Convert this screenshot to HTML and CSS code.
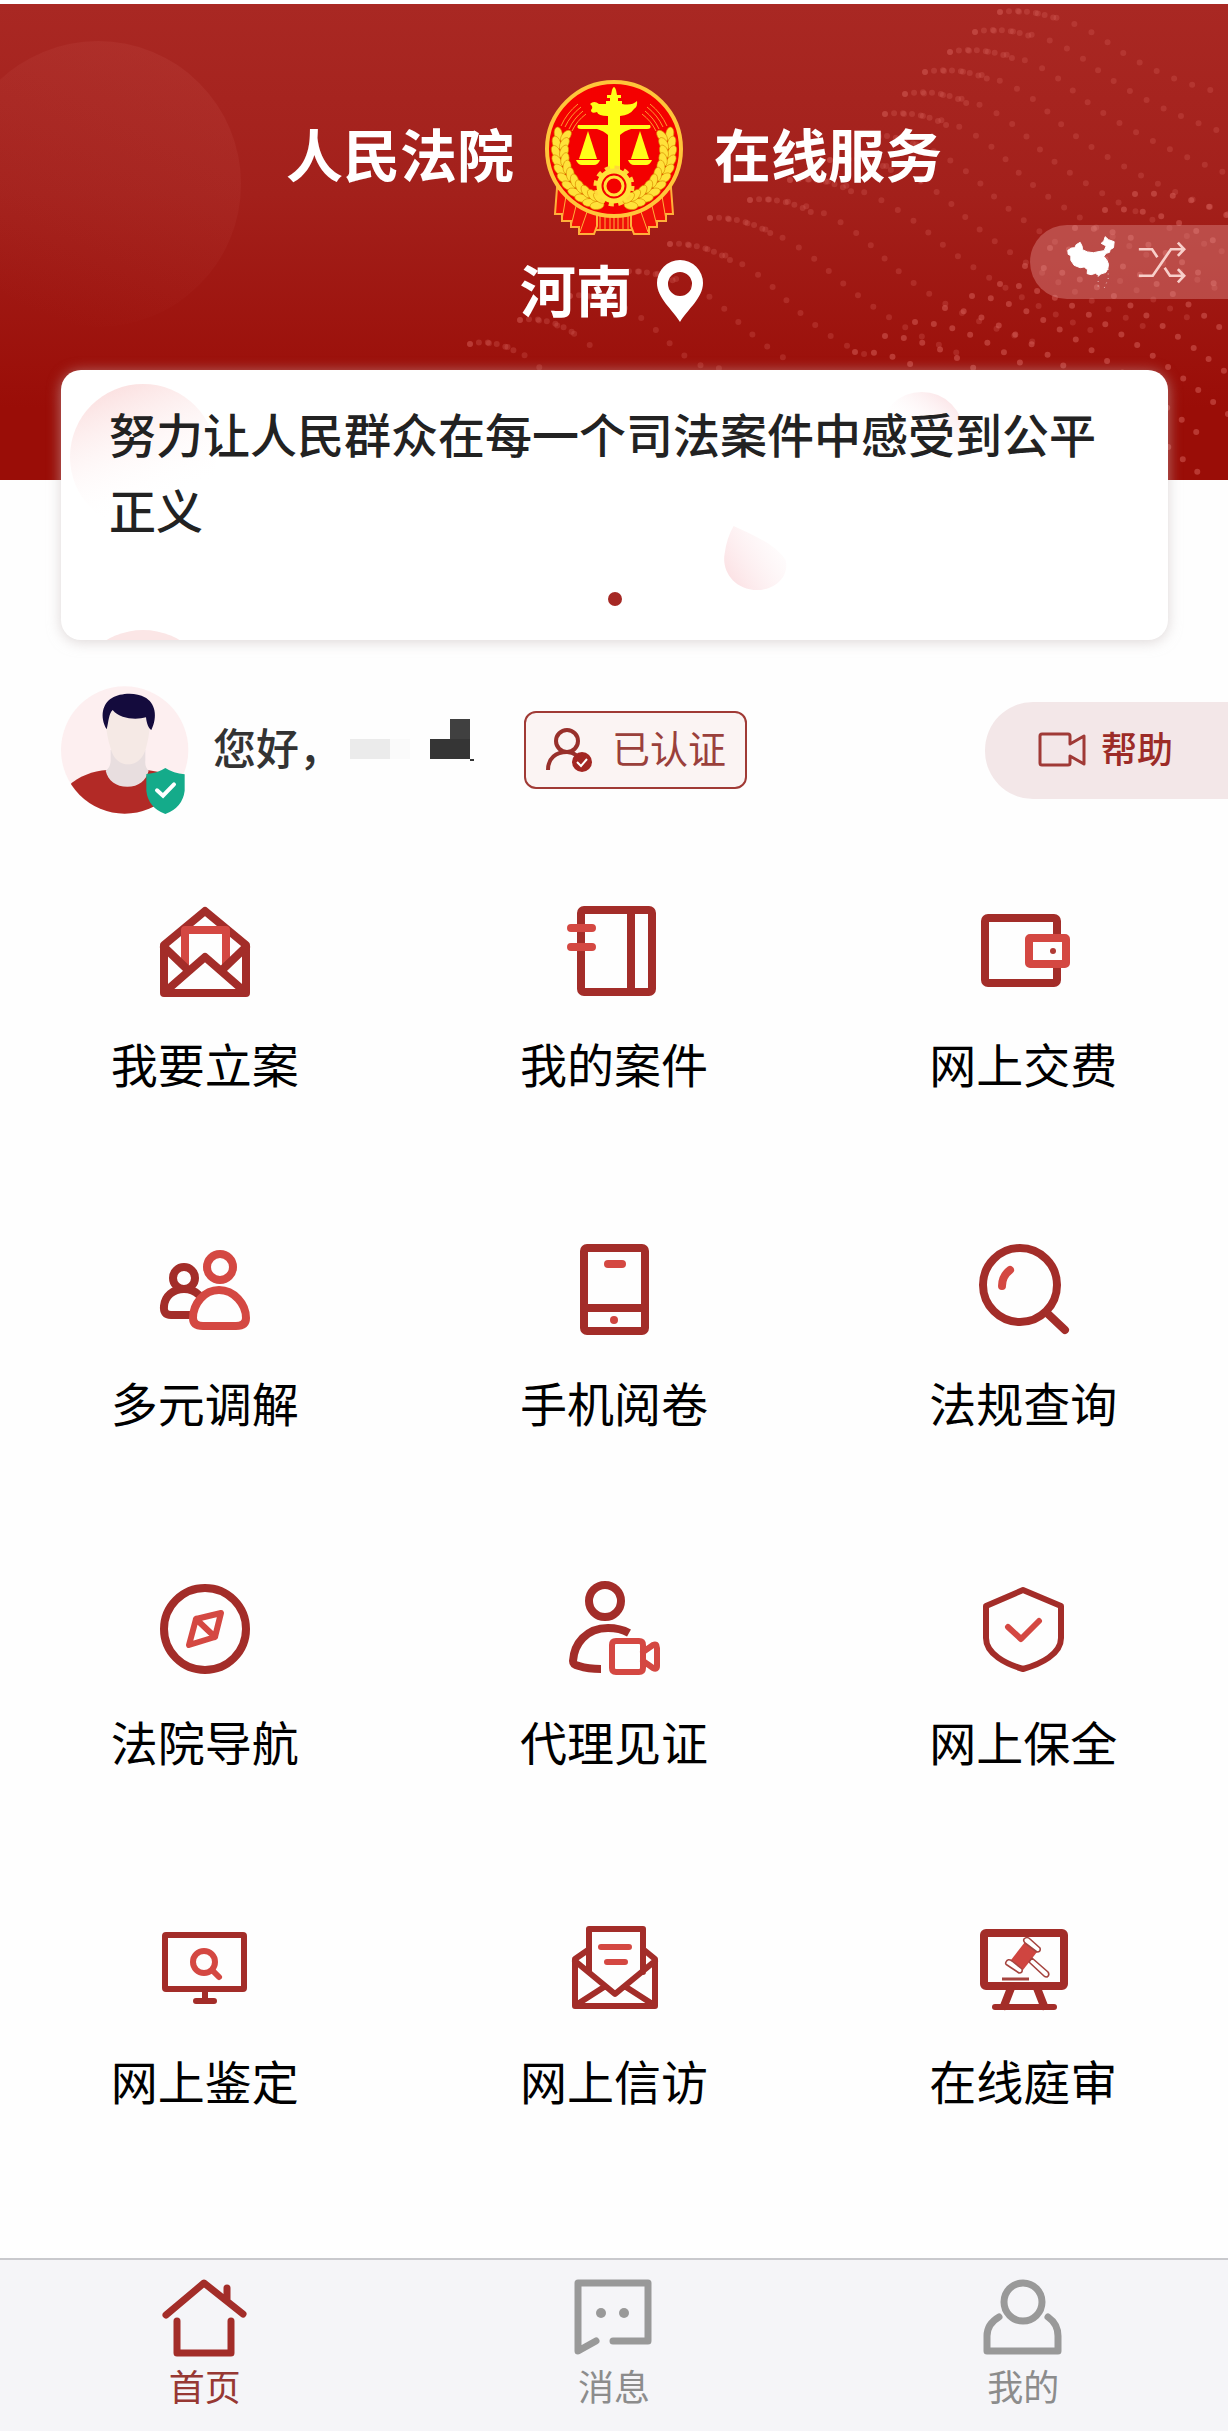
FILE: index.html
```html
<!DOCTYPE html>
<html lang="zh-CN">
<head>
<meta charset="utf-8">
<meta name="viewport" content="width=device-width, initial-scale=1">
<title>人民法院在线服务</title>
<link rel="stylesheet" href="styles.css">
</head>
<body>
<header class="hero">
  <svg class="hero-art" viewBox="0 0 1228 476" preserveAspectRatio="xMaxYMid slice" aria-hidden="true">
    <defs>
      <linearGradient id="bubble" x1="0.8" y1="0" x2="0.4" y2="1">
        <stop offset="0" stop-color="#c04a44" stop-opacity=".26"/>
        <stop offset="1" stop-color="#c04a44" stop-opacity="0"/>
      </linearGradient>
    </defs>
    <circle cx="98" cy="180" r="143" fill="url(#bubble)"/>
    <g class="dots">
      <path d="M1000 8Q1060 4 1110 40T1228 90"/>
      <path d="M975 28Q1040 20 1090 60T1228 130"/>
      <path d="M950 48Q1020 40 1070 84T1228 170"/>
      <path d="M925 68Q1000 60 1050 110T1228 210"/>
      <path d="M905 90Q980 84 1030 136T1228 250"/>
      <path d="M885 110Q960 106 1010 160T1228 290"/>
      <path d="M860 132Q930 130 985 184T1200 320"/>
      <path d="M830 156Q900 150 960 208T1160 330"/>
      <path d="M790 176Q860 170 930 230T1100 330"/>
      <path d="M750 196Q820 190 880 250T1040 340"/>
      <path d="M710 214Q770 214 830 268T960 350"/>
      <path d="M670 240Q730 240 780 290T880 356"/>
      <path d="M620 268Q680 262 730 310T800 360"/>
      <path d="M570 292Q620 290 660 330T720 364"/>
      <path d="M520 316Q560 312 600 350"/>
      <path d="M470 340Q510 334 540 364"/>
    </g>
    <g class="dots ridge">
      <path d="M1000 8Q1030 4 1060 16M975 28Q1005 22 1035 34M950 48Q980 42 1012 54M925 68Q960 62 990 76M905 90Q940 84 968 100M885 110Q920 106 948 122M860 132Q894 128 922 144M830 156Q866 150 894 168M790 176Q826 172 856 190M750 196Q784 192 814 210M710 214Q742 212 772 230M670 240Q700 238 730 256M620 268Q650 264 680 280M570 292Q596 288 624 306M520 316Q546 312 572 328M470 340Q494 334 520 350"/>
    </g>
    <g class="dots dots-bright">
      <path d="M1135 190Q1180 186 1228 212"/>
      <path d="M1105 206Q1160 200 1228 246"/>
      <path d="M1075 224Q1140 222 1228 290"/>
      <path d="M1050 244Q1120 244 1228 330"/>
      <path d="M1025 262Q1090 262 1228 370"/>
      <path d="M1000 280Q1070 280 1228 410"/>
      <path d="M972 292Q1040 292 1210 440"/>
      <path d="M945 304Q1010 306 1200 470"/>
      <path d="M915 318Q980 320 1060 390"/>
      <path d="M885 332Q940 334 1000 384"/>
      <path d="M855 348Q900 346 940 380"/>
    </g>
  </svg>
  <h1 class="brand">
    <span class="brand-text">人民法院</span>
    <svg class="emblem" viewBox="0 0 140 158" aria-hidden="true">
      <defs>
        <g id="leaf">
          <ellipse cx="12" cy="72" rx="4" ry="7" transform="rotate(-24 12 72)"/>
          <ellipse cx="20" cy="72" rx="4" ry="7" transform="rotate(24 20 72)"/>
        </g>
        <g id="half">
          <path class="ribbon" d="M13 110L11 136H18V143H27V149H35V156H50L53 148V136Z"/>
          <path class="ribbon-fold" d="M22 118L18 142M32 128L27 148M43 134L36 154"/>
        </g>
        <g id="wheat">
          <use href="#leaf" transform="rotate(16 70 72)"/>
          <use href="#leaf" transform="rotate(7 70 72)"/>
          <use href="#leaf" transform="rotate(-2 70 72)"/>
          <use href="#leaf" transform="rotate(-11 70 72)"/>
          <use href="#leaf" transform="rotate(-20 70 72)"/>
          <use href="#leaf" transform="rotate(-29 70 72)"/>
          <use href="#leaf" transform="rotate(-38 70 72)"/>
          <use href="#leaf" transform="rotate(-47 70 72)"/>
          <use href="#leaf" transform="rotate(-56 70 72)"/>
          <use href="#leaf" transform="rotate(-65 70 72)"/>
          <use href="#leaf" transform="rotate(-73 70 72)"/>
        </g>
        <g id="rays">
          <path d="M17 48A58 58 0 0 1 34 26M21 49A54 54 0 0 1 37 29M25 51A50 50 0 0 1 39 33M28 53A46 46 0 0 1 42 36"/>
        </g>
        <g id="pan">
          <path d="M44 53L35 81H53Z"/>
          <path d="M32 82H56Q54 87 50 87H38Q34 87 32 82Z"/>
        </g>
      </defs>
      <path class="ribbon" d="M50 134H90V152H50Z"/>
      <path class="ribbon-fold" d="M56 136V152M61 136V152M66 136V152M70 136V152M74 136V152M79 136V152M84 136V152"/>
      <use href="#half"/>
      <use href="#half" transform="translate(140 0) scale(-1 1)"/>
      <circle cx="70" cy="71" r="67" fill="#f40000" stroke="#ffc53a" stroke-width="4"/>
      <g fill="none" stroke="#ff9a2e" stroke-width="1">
        <use href="#rays"/>
        <use href="#rays" transform="translate(140 0) scale(-1 1)"/>
      </g>
      <g fill="#ffe23a" stroke="#d98a00" stroke-width=".6">
        <use href="#wheat"/>
        <use href="#wheat" transform="translate(140 0) scale(-1 1)"/>
      </g>
      <g fill="#ffff18">
        <path d="M68 12Q70 6 72 12L73 17H77V20H74V23H78V26Q88 28 93 23Q94 28 90 31Q86 37 76 38V92H64V38Q54 38 53 34Q47 36 47 32Q50 29 46 26Q50 22 55 26H62V23H66V20H63V17H67Z"/>
        <path d="M34 47Q32 51 37 51H53Q60 53 64 57V47H37ZM106 47Q108 51 103 51H87Q80 53 76 57V47H103Z"/>
        <use href="#pan"/>
        <use href="#pan" transform="translate(140 0) scale(-1 1)"/>
      </g>
      <circle cx="70" cy="108" r="18" fill="none" stroke="#ffd83a" stroke-width="5" stroke-dasharray="5 4.42"/>
      <circle cx="70" cy="108" r="15" fill="#f40000" stroke="#ffe23a" stroke-width="5"/>
      <circle cx="70" cy="108" r="9" fill="#f40000" stroke="#ffe23a" stroke-width="3"/>
    </svg>
    <span class="brand-text">在线服务</span>
  </h1>
  <button class="region" type="button">
    <span>河南</span>
    <svg class="pin" viewBox="0 0 48 62" aria-hidden="true">
      <path fill="#fff" fill-rule="evenodd" d="M24 0A23 23 0 0 1 47 23C47 38 31 50 24 62C17 50 1 38 1 23A23 23 0 0 1 24 0ZM24 12A12 12 0 1 0 24 36A12 12 0 1 0 24 12Z"/>
    </svg>
  </button>
  <button class="switcher" type="button" aria-label="切换地区">
    <svg class="map" viewBox="195 92 155 189" aria-hidden="true">
      <path fill="#fff" stroke="#fff" stroke-width="3" stroke-linejoin="round" d="M203 150L214 143L224 142L228 133L240 126L246 138L247 148L262 155L280 157L300 153L312 151L318 137L303 129L311 122L315 109L325 118L342 124L340 142L330 148L328 156L318 159L311 168L321 181L325 192L323 205L317 216L302 221L296 226L286 219L273 223L261 220L262 208L252 200L240 202L222 195L212 180L212 166L204 162Z"/>
      <path fill="none" stroke="#fff" stroke-width="3" stroke-dasharray="2 12" d="M324 206V236L310 268M294 228V262"/>
    </svg>
    <svg class="shuffle" viewBox="410 120 150 136" aria-hidden="true">
      <path fill="none" stroke="#f8cfca" stroke-width="8" d="M415 148H455L471 172M415 228H457L512 148H548M493 204L509 228H548M533 128L552 148L533 168M533 208L552 228L533 248"/>
    </svg>
  </button>
</header>

<main class="content">
  <section class="notice">
    <svg class="notice-art" viewBox="0 0 1106 270" preserveAspectRatio="xMidYMid slice" aria-hidden="true">
      <defs>
        <linearGradient id="blush" x1="0.3" y1="0" x2="0.7" y2="1">
          <stop offset="0" stop-color="#fbdfdf"/>
          <stop offset=".8" stop-color="#fff" stop-opacity="0"/>
        </linearGradient>
        <linearGradient id="blush-right" x1="1" y1="0" x2="0.4" y2="0.8">
          <stop offset="0" stop-color="#f9d6da"/>
          <stop offset=".8" stop-color="#fff" stop-opacity="0"/>
        </linearGradient>
        <linearGradient id="blush-low" x1="0" y1="0.9" x2="0.9" y2="0.3">
          <stop offset="0" stop-color="#fbdde0"/>
          <stop offset="1" stop-color="#fdf0f2" stop-opacity=".2"/>
        </linearGradient>
      </defs>
      <circle cx="82" cy="87" r="73" fill="url(#blush)"/>
      <circle cx="860" cy="64" r="42" fill="url(#blush-right)"/>
      <path d="M672 156C688 164 712 172 724 190C728 208 712 220 696 220C672 220 660 200 663 184Q665 168 672 156Z" fill="url(#blush-low)"/>
      <circle cx="82" cy="332" r="72" fill="#fbe6e6"/>
    </svg>
    <p class="notice-text">努力让人民群众在每一个司法案件中感受到公平正义</p>
    <span class="notice-dot"></span>
  </section>

  <section class="user">
    <svg class="avatar" viewBox="63 48 384 384" aria-hidden="true">
      <defs><clipPath id="face-clip"><circle cx="254" cy="240" r="191"/></clipPath></defs>
      <circle cx="254" cy="240" r="191" fill="#fdeff0"/>
      <g clip-path="url(#face-clip)">
        <path fill="#b22a26" d="M85 348C115 318 160 303 200 300H322L440 320V440H85Z"/>
        <path fill="#e8dedf" d="M212 240H316V270Q314 292 326 302C318 332 296 350 262 350C228 350 204 332 197 302Q212 292 212 270Z"/>
        <path fill="#f5e9e5" d="M198 120H330V170Q326 205 318 235C308 268 290 283 264 283C236 283 218 262 212 235Q200 200 198 160Z"/>
        <path fill="#140b3d" d="M200 178C178 140 188 100 216 84C240 68 290 66 314 82C346 98 354 140 334 180C326 176 320 162 318 142C290 150 240 148 218 120C206 130 206 156 200 178Z"/>
      </g>
      <path fill="#14ab8a" d="M319 312Q352 310 376 294Q400 310 434 313V362Q428 412 376 432Q324 412 319 362Z"/>
      <path fill="none" stroke="#fff" stroke-width="12" stroke-linecap="round" d="M351 361L369 377L402 343"/>
    </svg>
    <p class="greeting">您好，</p>
    <svg class="masked-name" viewBox="0 0 130 44" role="img" aria-label="姓名已隐藏">
      <path fill="#ebebeb" d="M6 21H46V41H6Z"/>
      <path fill="#fafafa" d="M46 21H66V41H46Z"/>
      <path fill="#404040" d="M106 1H126V21H106Z"/>
      <path fill="#353535" d="M86 21H126V41H86ZM126 41H130V43H126Z"/>
    </svg>
    <span class="verified">
      <svg class="verified-icon" viewBox="545 722 50 50" aria-hidden="true">
        <circle cx="567" cy="738" r="11" fill="none" stroke="#98302b" stroke-width="4"/>
        <path fill="none" stroke="#98302b" stroke-width="4" d="M548 767C548 755 556 749 567 749Q572 749 576 752"/>
        <circle cx="582" cy="759" r="10" fill="#a32622"/>
        <path fill="none" stroke="#fff" stroke-width="2" d="M577 759L581 763L587 756"/>
      </svg>
      <span class="verified-text">已认证</span>
    </span>
    <button class="help" type="button">
      <svg class="help-icon" viewBox="0 0 48 36" aria-hidden="true">
        <path fill="none" stroke="#a03a36" stroke-width="3" stroke-linejoin="round" d="M4 2H30Q32 2 32 4V12L46 4V32L32 24V31Q32 33 30 33H4Q2 33 2 31V4Q2 2 4 2Z"/>
      </svg>
      <span class="help-text">帮助</span>
    </button>
  </section>

  <nav class="services" aria-label="服务">
    <a class="service" href="#filing">
      <svg class="icon" viewBox="0 0 96 96" aria-hidden="true">
        <path class="dark" d="M7 42L48 8L89 42V90H7Z"/>
        <path class="light flat" d="M28 62V27H69V62"/>
        <path class="dark" d="M7 44L32 68M89 44L64 68M9 88L48 54L87 88"/>
      </svg>
      我要立案</a>
    <a class="service" href="#cases">
      <svg class="icon" viewBox="0 0 96 96" aria-hidden="true">
        <rect class="dark" x="15" y="7" width="71" height="82" rx="3"/>
        <path class="dark" d="M65 8V88"/>
        <path class="light" d="M5 25H26M5 44H26"/>
      </svg>
      我的案件</a>
    <a class="service" href="#payment">
      <svg class="icon" viewBox="0 0 96 96" aria-hidden="true">
        <rect class="dark" x="10" y="15" width="72" height="65" rx="3"/>
        <rect class="light filled" x="54" y="35" width="37" height="26" rx="1"/>
        <circle cx="78" cy="48" r="3" fill="#b03a35"/>
      </svg>
      网上交费</a>
    <a class="service" href="#mediation">
      <svg class="icon" viewBox="0 0 96 96" aria-hidden="true">
        <circle class="dark" cx="27" cy="36" r="11"/>
        <path class="dark" d="M42 73H14Q6 73 7 64C8 54 16 47 27 47Q36 47 42 53"/>
        <circle class="light" cx="63" cy="25" r="13"/>
        <path class="light filled" d="M62 48C47 48 36 62 36 76Q36 84 46 84H79Q89 84 89 76C89 62 77 48 62 48Z"/>
      </svg>
      多元调解</a>
    <a class="service" href="#reading">
      <svg class="icon" viewBox="0 0 96 96" aria-hidden="true">
        <rect class="dark" x="18" y="6" width="61" height="83" rx="3"/>
        <path class="dark" d="M18 66H79"/>
        <path class="light" d="M42 22H56"/>
        <circle cx="48" cy="78" r="4" fill="#cf4540"/>
      </svg>
      手机阅卷</a>
    <a class="service" href="#laws">
      <svg class="icon" viewBox="0 0 96 96" aria-hidden="true">
        <circle class="dark" cx="45" cy="43" r="37"/>
        <path class="dark" d="M72 71L90 88"/>
        <path class="light" d="M35 28Q27 34 27 44"/>
      </svg>
      法规查询</a>
    <a class="service" href="#navigation">
      <svg class="icon" viewBox="0 0 96 96" aria-hidden="true">
        <circle class="dark" cx="48" cy="48" r="41"/>
        <path class="light mid" d="M64 32L58 56L32 64L39 38ZM39 38L58 56"/>
      </svg>
      法院导航</a>
    <a class="service" href="#witness">
      <svg class="icon" viewBox="0 0 96 96" aria-hidden="true">
        <circle class="dark" cx="39" cy="20" r="16"/>
        <path class="dark flat" d="M63 52Q54 47 42 47C20 47 8 63 7 80Q7 84 13 85Q22 88 35 88"/>
        <path class="light mid" d="M50 60H73Q77 60 77 64V87Q77 91 73 91H50Q46 91 46 87V64Q46 60 50 60ZM77 71L87 64Q91 62 91 67V85Q91 89 87 87L77 80"/>
      </svg>
      代理见证</a>
    <a class="service" href="#preservation">
      <svg class="icon" viewBox="0 0 96 96" aria-hidden="true">
        <path class="dark mid" d="M48 9L86 25V57C86 73 66 83 48 88C31 83 11 73 11 57V25Z"/>
        <path class="light mid" d="M33 46L46 58L64 40"/>
      </svg>
      网上保全</a>
    <a class="service" href="#appraisal">
      <svg class="icon" viewBox="0 0 96 96" aria-hidden="true">
        <rect class="dark mid" x="8" y="15" width="79" height="54" rx="1"/>
        <path class="dark mid" d="M48 69V81M39 81H57"/>
        <circle class="light mid" cx="47" cy="42" r="11"/>
        <path class="light mid" d="M55 50L62 57"/>
      </svg>
      网上鉴定</a>
    <a class="service" href="#petition">
      <svg class="icon" viewBox="0 0 96 96" aria-hidden="true">
        <path class="dark mid" d="M23 52V9H77V52M22 30L9 39V86H89V39L78 30M9 41L49 74L89 41M10 85L38 67M88 85L60 67"/>
        <path class="light mid" d="M35 27H63M41 42H59"/>
      </svg>
      网上信访</a>
    <a class="service" href="#trial">
      <svg class="icon" viewBox="0 0 96 96" aria-hidden="true">
        <rect class="dark" x="9" y="13" width="80" height="53" rx="2"/>
        <path class="dark" d="M36 68L29 86M62 68L69 86"/>
        <path class="dark mid" d="M20 87H79"/>
        <path fill="#cf4540" d="M50 22L62 32L48 50L36 40Z"/>
        <path fill="#fff" stroke="#a5443f" stroke-width="1.6" stroke-linejoin="round" d="M49 19Q52 16 55 19L65 28Q66 32 62 32L50 23Q48 21 49 19ZM31 42Q33 38 37 41L47 49Q48 53 44 53L32 45Q30 44 31 42ZM54 42L57 38L73 52Q75 55 72 57Q70 57 69 56Z"/>
        <path fill="none" stroke="#a5443f" stroke-width="3" d="M27 59H54"/>
      </svg>
      在线庭审</a>
  </nav>
</main>

<nav class="tabs" aria-label="主导航">
  <a class="tab active" href="#home" aria-current="page">
    <svg class="tab-icon" viewBox="0 0 88 80" aria-hidden="true">
      <path d="M5 37L43 5L82 36M66 10V22M16 43V75H70V43"/>
    </svg>
    首页</a>
  <a class="tab" href="#messages">
    <svg class="tab-icon" viewBox="0 0 88 80" aria-hidden="true">
      <path d="M43 63H78V5H8V73L26 63"/>
      <circle class="eye" cx="31" cy="35" r="5"/>
      <circle class="eye" cx="54" cy="35" r="5"/>
    </svg>
    消息</a>
  <a class="tab" href="#me">
    <svg class="tab-icon" viewBox="0 0 88 80" aria-hidden="true">
      <circle cx="44" cy="24" r="19"/>
      <path d="M20 39Q8 46 8 58V73H79V58Q79 46 69 39"/>
    </svg>
    我的</a>
</nav>
</body>
</html>
```
FILE: styles.css
```css
* {
  box-sizing: border-box;
}

body {
  margin: 0;
  min-height: 100vh;
  display: flex;
  flex-direction: column;
  background: #fefefe;
  color: #000;
  font-family: "Noto Sans CJK SC", sans-serif;
}

h1,
p {
  margin: 0;
}

button {
  border: 0;
  padding: 0;
  background: none;
  color: inherit;
  font: inherit;
  cursor: pointer;
}

a {
  color: inherit;
  text-decoration: none;
}

svg {
  display: block;
  flex: none;
}

/* Header */
.hero {
  position: relative;
  display: flex;
  flex-direction: column;
  align-items: center;
  gap: 12px;
  margin-top: 4px;
  padding: 74px 0 152px;
  background: linear-gradient(#a92823, #a3201b 40%, #9a0d07 85%);
  color: #fff;
}

.hero-art {
  position: absolute;
  inset: 0;
  width: 100%;
  height: 100%;
}

.dots {
  fill: none;
  stroke: #d8625c;
  stroke-width: 6;
  stroke-linecap: round;
  stroke-dasharray: 0 19;
  opacity: .28;
}

.ridge {
  stroke-dasharray: 0 9;
  opacity: .3;
}

.dots-bright {
  opacity: .5;
}

.brand {
  position: relative;
  display: flex;
  align-items: center;
  gap: 30px;
  font-size: 57px;
  font-weight: 700;
  line-height: 80px;
}

.brand-text {
  padding-bottom: 10px;
}

.emblem {
  width: 140px;
  height: 158px;
}

.ribbon {
  fill: #f01008;
  stroke: #ffb03a;
  stroke-width: 2;
}

.ribbon-fold {
  fill: none;
  stroke: #ffb03a;
  stroke-width: 1;
}

.region {
  position: relative;
  display: flex;
  align-items: center;
  gap: 24px;
  padding-right: 4px;
  font-size: 56px;
  font-weight: 700;
  line-height: 80px;
}

.pin {
  width: 48px;
  height: 62px;
  margin-top: 6px;
}

.switcher {
  position: absolute;
  top: 221px;
  right: 0;
  display: flex;
  align-items: center;
  gap: 20px;
  height: 74px;
  padding: 0 41px 0 35px;
  border-radius: 37px 0 0 37px;
  background: rgba(224, 144, 140, .42);
}

.map {
  width: 52px;
  height: 63px;
}

.shuffle {
  width: 50px;
  height: 45px;
}

/* Main column */
.content {
  flex: 1;
  display: flex;
  flex-direction: column;
  padding-bottom: 145px;
}

.notice {
  position: relative;
  display: flex;
  flex-direction: column;
  align-items: center;
  gap: 45px;
  margin: -110px 60px 0 61px;
  padding: 25px 48px 34px;
  border-radius: 20px;
  background: #fff;
  box-shadow: 0 2px 14px rgba(200, 190, 190, .6);
}

.notice-art {
  position: absolute;
  inset: 0;
  width: 100%;
  height: 100%;
  border-radius: 20px;
}

.notice-text {
  position: relative;
  align-self: stretch;
  color: #222;
  font-size: 47px;
  font-weight: 500;
  line-height: 76px;
}

.notice-dot {
  position: relative;
  width: 14px;
  height: 14px;
  border-radius: 50%;
  background: #a52824;
}

/* User row */
.user {
  display: flex;
  align-items: center;
  margin-top: 46px;
  padding-left: 61px;
}

.avatar {
  width: 128px;
  height: 128px;
}

.greeting {
  margin-left: 24px;
  padding-bottom: 8px;
  color: #333;
  font-size: 43px;
  font-weight: 500;
  line-height: 64px;
}

.masked-name {
  width: 130px;
  height: 44px;
  margin-left: 2px;
  margin-bottom: 20px;
}

.verified {
  display: flex;
  align-items: center;
  gap: 17px;
  height: 78px;
  margin-left: 50px;
  padding: 0 19px;
  border: 2px solid #a03a35;
  border-radius: 12px;
  background: #fbf4f3;
  color: #9a403b;
  font-size: 38px;
  line-height: 56px;
}

.verified-icon {
  width: 50px;
  height: 50px;
}

.verified-text,
.help-text {
  padding-bottom: 6px;
}

.help {
  display: flex;
  align-items: center;
  gap: 15px;
  height: 97px;
  margin-left: auto;
  padding: 0 55px 0 53px;
  border-radius: 48px 0 0 48px;
  background: #f3e7e8;
  color: #9c2b27;
  font-size: 36px;
  font-weight: 500;
}

.help-icon {
  width: 48px;
  height: 36px;
}

/* Service grid */
.services {
  display: grid;
  grid-template-columns: repeat(3, 1fr);
  row-gap: 147px;
  margin-top: 89px;
}

.service {
  display: flex;
  flex-direction: column;
  align-items: center;
  gap: 32px;
  font-size: 47px;
  line-height: 64px;
}

.icon {
  width: 96px;
  height: 96px;
}

.dark,
.light {
  fill: none;
  stroke: #a32d29;
  stroke-width: 8;
  stroke-linecap: round;
  stroke-linejoin: round;
}

.light {
  stroke: #d44842;
}

.mid {
  stroke-width: 6;
}

.flat {
  stroke-linecap: butt;
}

.filled {
  fill: #fefefe;
}

/* Bottom tabs */
.tabs {
  display: grid;
  grid-template-columns: repeat(3, 1fr);
  padding: 18px 0 24px;
  border-top: 2px solid #c9c9cd;
  background: #f5f5f8;
}

.tab {
  display: flex;
  flex-direction: column;
  align-items: center;
  gap: 5px;
  color: #8c8c8c;
  font-size: 36px;
  line-height: 44px;
}

.tab.active {
  color: #973833;
}

.tab-icon {
  width: 88px;
  height: 80px;
  fill: none;
  stroke: #999;
  stroke-width: 7;
  stroke-linecap: round;
  stroke-linejoin: round;
}

.active .tab-icon {
  stroke: #a32d29;
}

.eye {
  fill: #999;
  stroke: none;
}
```
